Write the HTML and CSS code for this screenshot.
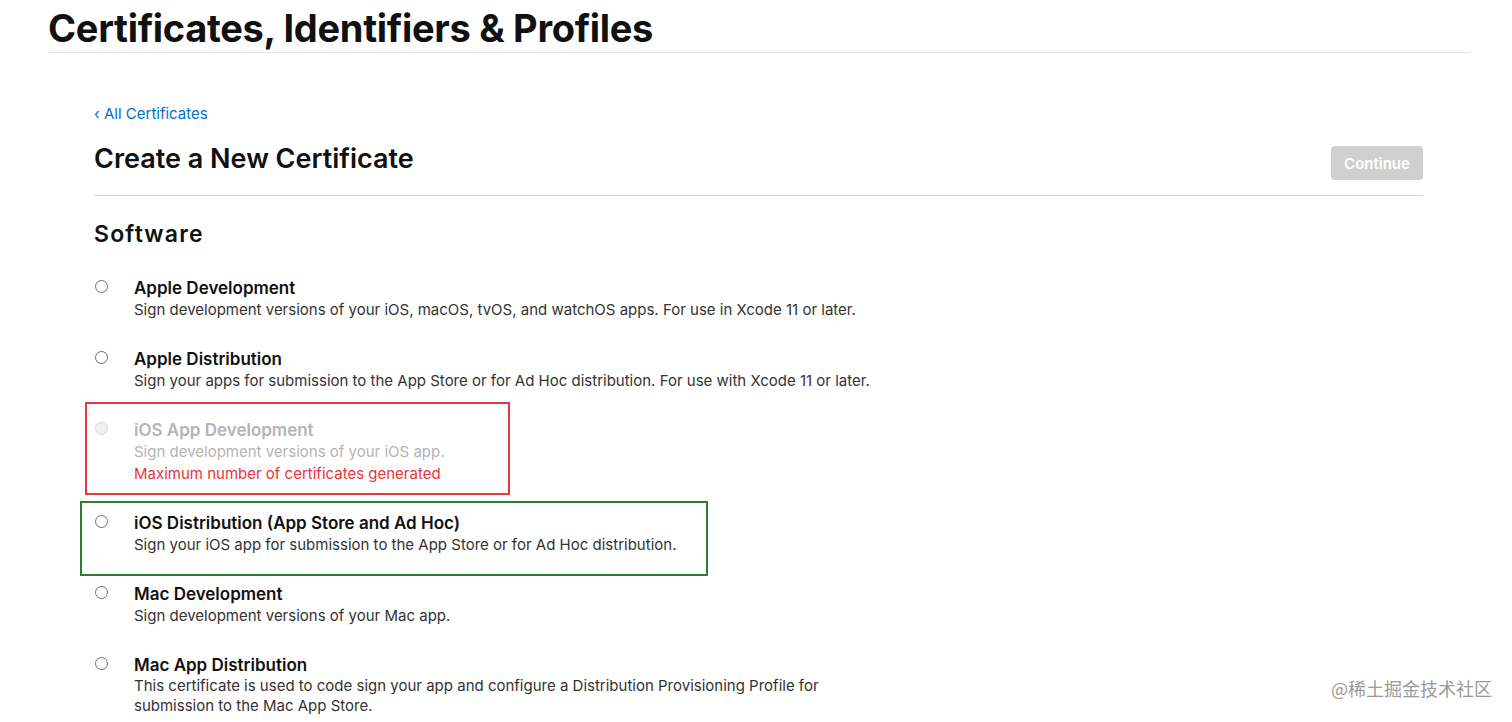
FILE: index.html
```html
<!DOCTYPE html>
<html lang="en">
<head>
<meta charset="utf-8">
<title>Create a New Certificate</title>
<link rel="stylesheet" href="styles.css">
</head>
<body>
<header class="page-header">
  <h1 class="page-title">Certificates, Identifiers &amp; Profiles</h1>
</header>
<main class="content">
  <a class="back-link" href="#">‹ All Certificates</a>
  <div class="title-row">
    <h2 class="create-title">Create a New Certificate</h2>
    <button class="continue-btn" disabled>Continue</button>
  </div>
  <h3 class="section-title">Software</h3>
  <ul class="options">
    <li class="option">
      <span class="radio"></span>
      <div class="option-text">
        <div class="option-name">Apple Development</div>
        <div class="option-desc">Sign development versions of your iOS, macOS, tvOS, and watchOS apps. For use in Xcode 11 or later.</div>
      </div>
    </li>
    <li class="option">
      <span class="radio"></span>
      <div class="option-text">
        <div class="option-name">Apple Distribution</div>
        <div class="option-desc">Sign your apps for submission to the App Store or for Ad Hoc distribution. For use with Xcode 11 or later.</div>
      </div>
    </li>
    <li class="option disabled">
      <span class="annot annot-red"></span>
      <span class="radio"></span>
      <div class="option-text">
        <div class="option-name">iOS App Development</div>
        <div class="option-desc">Sign development versions of your iOS app.</div>
        <div class="option-error">Maximum number of certificates generated</div>
      </div>
    </li>
    <li class="option">
      <span class="annot annot-green"></span>
      <span class="radio"></span>
      <div class="option-text">
        <div class="option-name">iOS Distribution (App Store and Ad Hoc)</div>
        <div class="option-desc">Sign your iOS app for submission to the App Store or for Ad Hoc distribution.</div>
      </div>
    </li>
    <li class="option">
      <span class="radio"></span>
      <div class="option-text">
        <div class="option-name">Mac Development</div>
        <div class="option-desc">Sign development versions of your Mac app.</div>
      </div>
    </li>
    <li class="option">
      <span class="radio"></span>
      <div class="option-text">
        <div class="option-name">Mac App Distribution</div>
        <div class="option-desc narrow">This certificate is used to code sign your app and configure a Distribution Provisioning Profile for submission to the Mac App Store.</div>
      </div>
    </li>
  </ul>
</main>
<div class="watermark">@稀土掘金技术社区</div>
</body>
</html>
```

FILE: styles.css
```css
* { box-sizing: border-box; }
html, body { margin: 0; padding: 0; }
body {
  font-family: Inter, "Noto Sans", "Noto Sans CJK SC", sans-serif;
  color: #1d1d1f;
  background: #fff;
  height: 722px;
  overflow: hidden;
  position: relative;
}
.page-header {
  margin: 0 42px 0 48px;
  border-bottom: 1px solid #e3e3e3;
  padding: 7px 0 3px;
}
.page-title {
  margin: 0;
  font-size: 38px;
  line-height: 42px;
  font-weight: 700;
  letter-spacing: -0.3px;
  color: #111;
}
.content {
  padding: 51px 89px 0 94px;
}
.back-link {
  display: block;
  font-size: 15px;
  line-height: 20px;
  color: #0070c9;
  text-decoration: none;
}
.title-row {
  display: flex;
  justify-content: space-between;
  align-items: flex-start;
  border-bottom: 1px solid #d6d6d6;
  padding: 14px 0 15px;
}
.create-title {
  margin: 5px 0 0;
  font-size: 27px;
  line-height: 32px;
  font-weight: 600;
  color: #111;
}
.continue-btn {
  font-family: inherit;
  width: 92px;
  height: 34px;
  margin-top: 8px;
  border: none;
  border-radius: 4px;
  background: #cfcfcf;
  color: #fff;
  font-size: 15px;
  font-weight: 600;
  padding: 0;
}
.section-title {
  margin: 22px 0 0;
  font-size: 23px;
  line-height: 32px;
  font-weight: 600;
  letter-spacing: 1.2px;
  color: #111;
}
.options {
  list-style: none;
  margin: 27px 0 0;
  padding: 0;
}
.option {
  position: relative;
  display: flex;
  gap: 26px;
  margin-bottom: 27px;
}
.radio {
  flex: none;
  width: 13px;
  height: 13px;
  margin-top: 3px;
  margin-left: 1px;
  border: 1px solid #6e6e6e;
  border-radius: 50%;
  background: #fff;
}
.option-name {
  font-size: 17px;
  line-height: 22px;
  font-weight: 600;
  color: #111;
}
.option-desc {
  font-size: 15px;
  line-height: 22px;
  color: #333;
}
.option-desc.narrow { max-width: 700px; line-height: 20px; }
.option-error {
  font-size: 15px;
  line-height: 22px;
  color: #e8353b;
}
.option.disabled .option-name,
.option.disabled .option-desc { color: #b4b4b4; }
.option.disabled .radio { border-color: #d6d6d6; background: #f0f0f0; }
.annot {
  position: absolute;
  pointer-events: none;
}
.annot-red {
  left: -9px;
  top: -17px;
  width: 425px;
  height: 93px;
  border: 2px solid #e8383d;
}
.annot-green {
  left: -14px;
  top: -11px;
  width: 628px;
  height: 75px;
  border: 2px solid #2f7d32;
}
.watermark {
  position: absolute;
  right: 20px;
  bottom: 21px;
  font-size: 18px;
  color: #9a9a9a;
  font-family: "Noto Sans CJK SC", sans-serif;
}
```
